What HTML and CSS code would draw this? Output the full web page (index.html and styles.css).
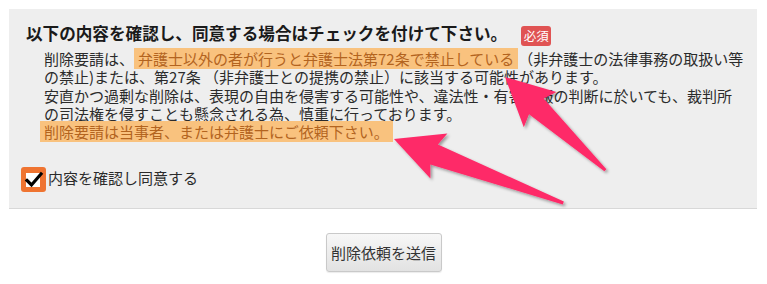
FILE: index.html
```html
<!DOCTYPE html>
<html lang="ja">
<head>
<meta charset="utf-8">
<link rel="stylesheet" href="styles.css">
</head>
<body>
<div class="page">
  <section class="agree-box">
    <div class="title-row">
      <h2 class="title">以下の内容を確認し、同意する場合はチェックを付けて下さい。</h2>
      <span class="badge">必須</span>
    </div>
    <p class="notice">削除要請は、<span class="hl">弁護士以外の者が行うと弁護士法第72条で禁止している</span>（非弁護士の法律事務の取扱い等<br>の禁止)または、第27条 （非弁護士との提携の禁止）に該当する可能性があります。<br>安直かつ過剰な削除は、表現の自由を侵害する可能性や、違法性・有害情報の判断に於いても、裁判所<br>の司法権を侵すことも懸念される為、慎重に行っております。<br><span class="hl hl-line">削除要請は当事者、または弁護士にご依頼下さい。</span></p>
    <label class="check-row">
      <svg class="checkbox" width="25" height="25" viewBox="0 0 25 25">
        <rect x="0" y="0" width="25" height="25" rx="3" fill="#ef7431"/>
        <rect x="5" y="6" width="14" height="14" fill="#ffffff"/>
        <path d="M6 13.5 L10.5 18 L20 7" fill="none" stroke="#000" stroke-width="3.2" stroke-linecap="square" stroke-linejoin="miter"/>
      </svg>
      <span class="check-label">内容を確認し同意する</span>
    </label>
  </section>
  <div class="actions">
    <button class="submit" type="button">削除依頼を送信</button>
  </div>
  <svg class="arrows" width="767" height="284" viewBox="0 0 767 284">
    <defs>
      <filter id="sh" x="-20%" y="-20%" width="140%" height="140%">
        <feGaussianBlur in="SourceAlpha" stdDeviation="1.5"/>
        <feOffset dx="1.5" dy="2" result="b"/>
        <feComponentTransfer><feFuncA type="linear" slope="0.35"/></feComponentTransfer>
        <feMerge><feMergeNode/><feMergeNode in="SourceGraphic"/></feMerge>
      </filter>
    </defs>
    <g filter="url(#sh)" fill="#fe2a68">
      <polygon transform="translate(505 77) rotate(42.9)" points="0,0 48,-24 43,-10.5 137,-1.5 137,1.5 43,11 48,24"/>
      <polygon transform="translate(394 139) rotate(20.7)" points="0,0 48,-24 43,-10.5 181,-1.5 181,1.5 43,11 48,24"/>
    </g>
  </svg>
</div>
</body>
</html>
```
FILE: styles.css
```css
html, body {
  margin: 0;
  padding: 0;
  background: #ffffff;
}
body {
  font-family: "Noto Sans CJK JP", "Noto Sans", sans-serif;
  color: #333333;
}
.page {
  position: relative;
  width: 767px;
  height: 284px;
  padding-top: 9px;
  box-sizing: border-box;
}
.agree-box {
  margin: 0 10px 0 9px;
  background: #eeeeee;
  border-bottom: 1px solid #d8d8d8;
  padding: 14px 4px 16px 17px;
}
.title-row {
  display: flex;
  align-items: flex-start;
}
.title {
  margin: 0;
  font-size: 16.6px;
  line-height: 20px;
  font-weight: bold;
  color: #1a1a1a;
}
.badge {
  margin-left: 14px;
  margin-top: 3px;
  margin-bottom: -3px;
  width: 30px;
  height: 20px;
  border-radius: 3px;
  background: #e05353;
  color: #ffffff;
  font-size: 12.5px;
  line-height: 20px;
  text-align: center;
}
.notice {
  margin: 7px 0 0 18px;
  font-size: 15px;
  line-height: 18.3px;
  color: #2b2b2b;
  white-space: nowrap;
}
.hl {
  background: #f9c27e;
  color: #b3641f;
  padding: 0 4px;
}
.hl-line {
  margin-left: -4px;
}
.check-row {
  display: flex;
  align-items: center;
  margin-top: 26px;
  margin-left: -5px;
}
.checkbox {
  display: block;
}
.check-label {
  font-size: 15px;
  line-height: 20px;
  margin-left: 2px;
  margin-top: -3px;
  color: #2b2b2b;
}
.actions {
  display: flex;
  justify-content: center;
  margin-top: 24px;
}
.submit {
  width: 116px;
  height: 39px;
  padding: 0;
  border: 1px solid #c9c9c9;
  border-radius: 3px;
  background: linear-gradient(#f7f7f7, #e2e2e2);
  font-family: "Noto Sans CJK JP", sans-serif;
  font-size: 15px;
  color: #333333;
  box-shadow: 0 1px 1px rgba(0,0,0,0.08);
}
.arrows {
  position: absolute;
  left: 0;
  top: 0;
  pointer-events: none;
}
```
